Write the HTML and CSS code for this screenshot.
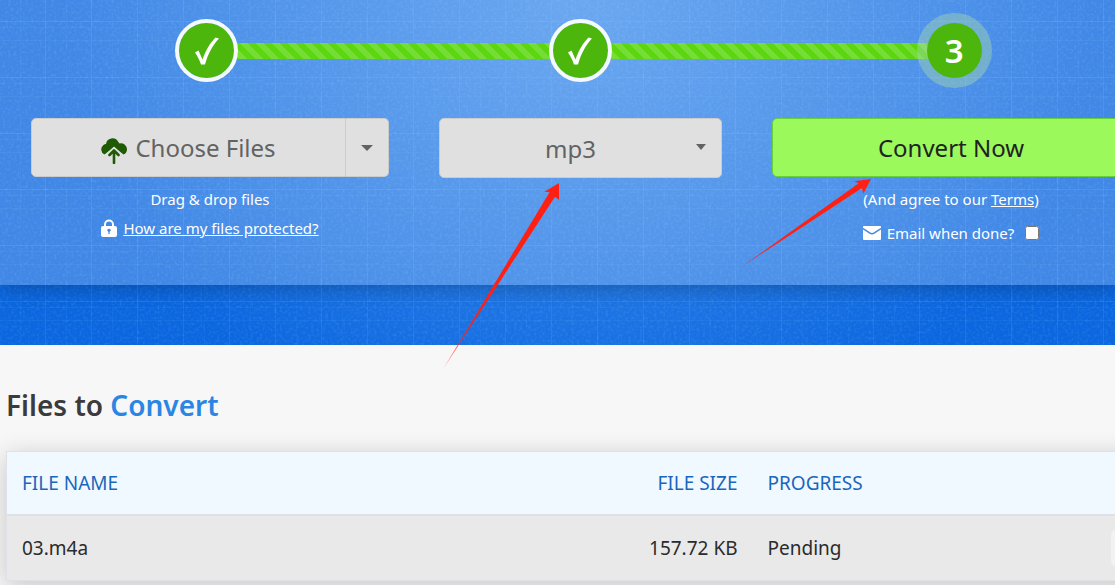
FILE: index.html
```html
<!DOCTYPE html>
<html lang="en">
<head>
    <meta charset="UTF-8">
    <title>Files to Convert</title>
    <meta name="viewport" content="width=device-width, initial-scale=1.0">
    <link rel="stylesheet" href="styles.css">
</head>
<body>
    <section class="hero">
        <svg class="hero-noise" aria-hidden="true">
            <filter id="noise" x="0" y="0" width="100%" height="100%">
                <feTurbulence type="fractalNoise" baseFrequency="0.35" numOctaves="2" seed="4"/>
                <feColorMatrix values="0 0 0 0 0.4  0 0 0 0 0.75  0 0 0 0 1  1.6 0 0 0 -0.7"/>
            </filter>
            <rect width="100%" height="100%" filter="url(#noise)"/>
        </svg>
        <div class="panel">
            <ol class="steps">
                <li class="step">
                    <span class="step-dot">
                        <svg width="30" height="34" viewBox="0 0 30 34" aria-label="Done"><path d="M3 18.500L6.500 16.500L10.500 25.500C14 16 18 9 23.500 3.500L27 4.500C20 12 16 20 13 30.500H9C7.500 26 5.500 22 3 18.500Z" fill="#fff"/></svg>
                    </span>
                </li>
                <li class="step">
                    <span class="step-dot">
                        <svg width="30" height="34" viewBox="0 0 30 34" aria-label="Done"><path d="M3 18.500L6.500 16.500L10.500 25.500C14 16 18 9 23.500 3.500L27 4.500C20 12 16 20 13 30.500H9C7.500 26 5.500 22 3 18.500Z" fill="#fff"/></svg>
                    </span>
                </li>
                <li class="step">
                    <span class="step-dot current">3</span>
                </li>
            </ol>

            <form class="converter">
                <div class="column">
                    <div class="btn-group">
                        <button type="button" class="btn btn-choose">
                            <svg width="26" height="28" viewBox="0 0 26 28" aria-hidden="true">
                                <path d="M3.500 18.500A5.500 5.500 0 0 1 2.500 9Q3.500 8 5 8A6.500 6.500 0 0 1 17 5.500L18.500 7.500A6 6 0 0 1 26 13A6 6 0 0 1 22.500 18.500L13 11Z" fill="#1f5a05"/>
                                <path d="M4.500 18.500L13 10.500L21.500 18.500Z" fill="#e0e0e0"/>
                                <path d="M13 27V15.500M8.500 19L13 14.500L17.500 19" fill="none" stroke="#1f5a05" stroke-width="2.600" stroke-linecap="round" stroke-linejoin="round"/>
                            </svg>
                            Choose Files
                        </button>
                        <button type="button" class="btn btn-more" aria-label="More sources"><span class="caret"></span></button>
                    </div>
                    <p class="note">Drag &amp; drop files</p>
                    <p class="note">
                        <svg width="16" height="18" viewBox="0 0 16 18" aria-hidden="true">
                            <path d="M4 8V5.500A4 4 0 0 1 12 5.500V8" fill="none" stroke="#fff" stroke-width="2"/>
                            <rect y="7" width="16" height="11" rx="2" fill="#fff"/>
                            <path d="M6.200 11.500A1.800 1.800 0 0 1 9.800 11.500L8.600 13V15H7.400V13Z" fill="#4388e0"/>
                        </svg>
                        <a href="#">How are my files protected?</a>
                    </p>
                </div>
                <div class="column select-wrap">
                    <select class="btn" aria-label="Output format">
                        <option>mp3</option>
                    </select>
                    <span class="caret"></span>
                </div>
                <div class="column">
                    <button type="submit" class="btn btn-convert">Convert Now</button>
                    <p class="note"><span>(And agree to our <a href="#">Terms</a>)</span></p>
                    <p class="note email">
                        <svg width="18" height="14" viewBox="0 0 18 14" aria-hidden="true">
                            <rect width="18" height="14" rx="1" fill="#fff"/>
                            <path d="M0 2.500L7 7.200Q9 8.400 11 7.200L18 2.500" fill="none" stroke="#4388e0" stroke-width="1.500"/>
                        </svg>
                        <label for="email">Email when done?</label>
                        <input type="checkbox" id="email">
                    </p>
                </div>
            </form>
        </div>

        <!-- Red pointer arrows -->
        <svg class="arrow arrow-format" width="118" height="188" viewBox="442 182 118 188" aria-hidden="true">
            <linearGradient id="fadeA" gradientUnits="userSpaceOnUse" x1="443" y1="369" x2="490" y2="293">
                <stop offset="0" stop-color="#ff2014" stop-opacity="0.600"/>
                <stop offset="1" stop-color="#ff2014"/>
            </linearGradient>
            <path d="M559 183L544.300 191.700L549.500 192.300L443.300 368.700L555 196.700L559 200Z" fill="url(#fadeA)"/>
        </svg>
        <svg class="arrow arrow-convert" width="131" height="90" viewBox="741 178 131 90" aria-hidden="true">
            <linearGradient id="fadeB" gradientUnits="userSpaceOnUse" x1="741" y1="267" x2="790" y2="233">
                <stop offset="0" stop-color="#ff2014" stop-opacity="0.750"/>
                <stop offset="1" stop-color="#ff2014"/>
            </linearGradient>
            <path d="M871 179L854.300 181.300L858.700 183.300L741.700 266.700L862 188L863.300 193.700Z" fill="url(#fadeB)"/>
        </svg>
    </section>

    <main class="files">
        <h2>Files to <span>Convert</span></h2>
        <table>
            <thead>
                <tr>
                    <th class="name">FILE NAME</th>
                    <th class="size">FILE SIZE</th>
                    <th>PROGRESS</th>
                    <th class="action"></th>
                </tr>
            </thead>
            <tbody>
                <tr>
                    <td>03.m4a</td>
                    <td class="size">157.72 KB</td>
                    <td>Pending</td>
                    <td class="action"><button type="button" class="btn-remove" aria-label="Remove"></button></td>
                </tr>
            </tbody>
        </table>
    </main>
</body>
</html>
```
FILE: styles.css
```css
* {
    box-sizing: border-box;
}
body {
    background: #f7f7f7;
    color: #292b2c;
    font-family: "Segoe UI", "Noto Sans", "Open Sans", sans-serif;
    font-size: 16px;
    margin: 0;
    overflow-x: hidden;
}
body::-webkit-scrollbar {
    display: none;
}
.hero {
    position: relative;
    padding-bottom: 60px;
    background:
        repeating-linear-gradient(90deg, transparent 0 20px, rgba(80,180,255,0.08) 20px 21px, transparent 21px 45px, rgba(80,180,255,0.18) 45px 46px),
        repeating-linear-gradient(180deg, transparent 0 21px, rgba(80,180,255,0.2) 21px 22px, transparent 22px 27px, rgba(80,180,255,0.1) 27px 28px, transparent 28px 40px, rgba(80,180,255,0.1) 40px 41px, transparent 41px 56px),
        radial-gradient(ellipse 520px 460px at 52% 0, #428fec, #0b66df);
}
.hero-noise {
    position: absolute;
    width: 100%;
    height: 100%;
    opacity: 0.18;
}
.panel {
    position: relative;
    padding: 13px 0 42px;
    background: rgba(255,255,255,0.22);
    box-shadow: 0 2px 20px rgba(0,0,0,0.28);
}

/* Steps */
.steps {
    display: grid;
    grid-template-columns: repeat(3, 1fr);
    list-style: none;
    margin: 0 -26px 30px 20px;
    padding: 0;
}
.step {
    position: relative;
    display: flex;
    align-items: center;
    justify-content: center;
    height: 75px;
}
.step:not(:last-child)::before {
    content: "";
    position: absolute;
    left: 50%;
    width: 100%;
    height: 16px;
    background: linear-gradient(45deg, rgba(255,255,255,0.16) 25%, transparent 25%, transparent 50%, rgba(255,255,255,0.16) 50%, rgba(255,255,255,0.16) 75%, transparent 75%) 0 0 / 16px 16px #5bd60f;
}
.step-dot {
    position: relative;
    display: flex;
    align-items: center;
    justify-content: center;
    width: 63px;
    height: 63px;
    border: 4px solid #f4f9fb;
    border-radius: 50%;
    background: #4db60d;
    background-clip: padding-box;
    color: #fff;
    font-size: 33px;
    font-weight: 600;
}
.step-dot.current {
    width: 75px;
    height: 75px;
    border: 10px solid rgba(163,215,176,0.45);
}

/* Converter */
.converter {
    display: grid;
    grid-template-columns: 358fr 283fr 358fr;
    gap: 50px;
    margin: 0 -15px 0 31px;
}
.column {
    text-align: center;
}
.btn {
    width: 100%;
    height: 59px;
    padding: 0;
    border: 1px solid #ccc;
    border-radius: 5px;
    background: #e0e0e0;
    color: #636363;
    font-family: inherit;
    font-size: 24px;
    cursor: pointer;
}
.btn-group {
    display: flex;
}
.btn-choose {
    display: flex;
    flex: 1;
    align-items: center;
    justify-content: center;
    gap: 8px;
    border-radius: 5px 0 0 5px;
}
.btn-choose svg {
    margin-top: 4px;
}
.btn-more {
    display: flex;
    align-items: center;
    justify-content: center;
    width: 43px;
    border-left: 0;
    border-radius: 0 5px 5px 0;
}
.caret {
    border: 6px solid transparent;
    border-top-color: #636363;
    border-bottom: 0;
}
.select-wrap {
    position: relative;
}
.select-wrap .btn {
    appearance: none;
    height: 60px;
    padding-right: 20px;
    text-align: center;
    text-align-last: center;
}
.select-wrap .caret {
    position: absolute;
    top: 26px;
    right: 16px;
    border-width: 6px 5px 0;
    pointer-events: none;
}
.btn-convert {
    border-color: #67cf3a;
    background: #9bf95b;
    color: #222;
}
.note {
    display: flex;
    align-items: center;
    justify-content: center;
    gap: 6px;
    height: 20px;
    margin: 12px 0 0;
    color: #fff;
    font-size: 15px;
    line-height: 20px;
}
.note + .note {
    margin-top: 9px;
}
.note + .email {
    margin-top: 14px;
}
.note a {
    color: #fff;
}
.note input {
    width: 14px;
    height: 14px;
    margin: 0 0 0 5px;
}
.arrow {
    position: absolute;
    z-index: 1;
}
.arrow-format {
    top: 182px;
    left: 442px;
}
.arrow-convert {
    top: 178px;
    left: 741px;
}

/* File list */
.files {
    padding: 0 0 40px 6px;
}
h2 {
    margin: 40px 0 26px;
    color: #3b3b3b;
    font-size: 28px;
    font-weight: 600;
    line-height: 40px;
}
h2 span {
    color: #2b86e3;
}
table {
    width: calc(100% + 40px);
    table-layout: fixed;
    border-collapse: collapse;
    border: 1px solid #dee2e6;
    box-shadow: 0 5px 24px rgba(0,0,0,0.2);
    font-size: 19px;
}
th, td {
    padding: 0 15px;
    text-align: left;
    font-weight: 400;
}
th {
    height: 63px;
    border-bottom: 2px solid #dee2e6;
    background: #f0f9ff;
    color: #1a66bd;
}
td {
    height: 66px;
    background: #e9e9e9;
}
.name {
    width: 50%;
}
.size {
    width: 172px;
    text-align: right;
}
.action {
    width: 44px;
    padding: 0;
}
.btn-remove {
    display: block;
    width: 36px;
    height: 36px;
    border: 0;
    border-radius: 5px;
    background: #f2f2f2;
}
```
